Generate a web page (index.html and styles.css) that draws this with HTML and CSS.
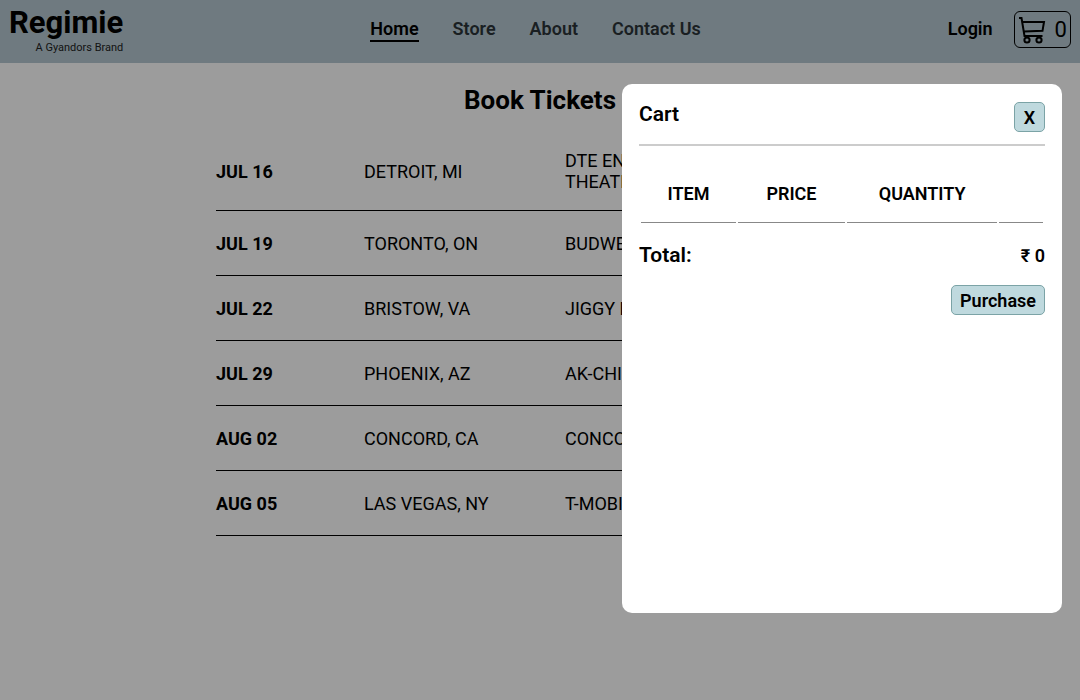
FILE: index.html
```html
<!DOCTYPE html>
<html lang="en">
<head>
<meta charset="utf-8">
<meta name="viewport" content="width=device-width, initial-scale=1">
<title>Regimie</title>
<link rel="stylesheet" href="styles.css">
</head>
<body>
<header class="site-header">
  <div class="brand">
    <span class="brand-name">Regimie</span>
    <span class="brand-tag">A Gyandors Brand</span>
  </div>
  <nav class="nav">
    <a class="nav-link active" href="#">Home</a>
    <a class="nav-link" href="#">Store</a>
    <a class="nav-link" href="#">About</a>
    <a class="nav-link" href="#">Contact Us</a>
  </nav>
  <div class="account">
    <a class="login" href="#">Login</a>
    <button class="cart-button" type="button" aria-label="Open cart">
      <svg class="cart-icon" viewBox="0 0 28 30" aria-hidden="true">
        <path d="M0 3H2.500L5.500 21H23.500M3 7H25L23.500 15.800L5 16.500"/>
        <circle cx="8" cy="25" r="2.600"/>
        <circle cx="20" cy="25" r="2.600"/>
      </svg>
      <span class="cart-count">0</span>
    </button>
  </div>
</header>

<main class="tickets">
  <h1 class="tickets-title">Book Tickets</h1>
  <ul class="tour-list">
    <li class="tour"><strong>JUL 16</strong><span>DETROIT, MI</span><span>DTE ENERGY MUSIC THEATRE</span></li>
    <li class="tour"><strong>JUL 19</strong><span>TORONTO, ON</span><span>BUDWEISER STAGE</span></li>
    <li class="tour"><strong>JUL 22</strong><span>BRISTOW, VA</span><span>JIGGY LUBE LIVE</span></li>
    <li class="tour"><strong>JUL 29</strong><span>PHOENIX, AZ</span><span>AK-CHIN PAVILION</span></li>
    <li class="tour"><strong>AUG 02</strong><span>CONCORD, CA</span><span>CONCORD PAVILION</span></li>
    <li class="tour"><strong>AUG 05</strong><span>LAS VEGAS, NY</span><span>T-MOBILE ARENA</span></li>
  </ul>
</main>

<div class="backdrop"></div>
<section class="cart" role="dialog" aria-labelledby="cart-title">
  <div class="cart-head">
    <h2 class="cart-title" id="cart-title">Cart</h2>
    <button class="button" type="button" aria-label="Close cart">X</button>
  </div>
  <table class="cart-table">
    <thead>
      <tr><th class="col-item">ITEM</th><th class="col-price">PRICE</th><th class="col-quantity">QUANTITY</th><th></th></tr>
    </thead>
  </table>
  <div class="cart-total">
    <span class="total-label">Total:</span>
    <span class="total-value">₹ 0</span>
  </div>
  <div class="cart-actions">
    <button class="button" type="button">Purchase</button>
  </div>
</section>
</body>
</html>
```
FILE: styles.css
```css
* {
  box-sizing: border-box;
}

body {
  margin: 0;
  min-height: 100vh;
  background: #fff;
  color: #000;
  font-family: Roboto, "Liberation Sans", sans-serif;
  font-size: 18px;
  line-height: 21px;
}

.site-header {
  display: flex;
  justify-content: space-between;
  height: 63px;
  padding: 0 9px;
  background: #b5c8d1;
}

.brand {
  display: flex;
  flex-direction: column;
  align-items: flex-end;
  padding-top: 5px;
}

.brand-name {
  font-size: 31px;
  font-weight: 700;
  line-height: 36px;
}

.brand-tag {
  color: #222;
  font-size: 11px;
  line-height: 14px;
}

.nav {
  display: flex;
  align-items: flex-start;
  gap: 34px;
  padding-top: 18px;
}

.nav-link {
  padding-bottom: 1px;
  border-bottom: 2px solid transparent;
  color: #2c3438;
  font-weight: 600;
  text-decoration: none;
}

.nav-link.active {
  border-color: #000;
  color: #000;
}

.account {
  display: flex;
  align-items: flex-start;
  gap: 21px;
  padding-top: 11px;
}

.login {
  padding-top: 7px;
  color: #000;
  font-weight: 600;
  text-decoration: none;
}

.cart-button {
  display: flex;
  align-items: center;
  gap: 8px;
  height: 37px;
  padding: 0 3px 0 4px;
  border: 1px solid #000;
  border-radius: 6px;
  background: transparent;
  color: #000;
  font: 22px/26px Roboto, sans-serif;
}

.cart-icon {
  width: 28px;
  height: 30px;
  fill: none;
  stroke: #000;
  stroke-width: 2;
}

.tickets {
  width: 60%;
  margin: 0 auto;
  padding-top: 21px;
}

.tickets-title {
  margin: 0;
  font-size: 26px;
  font-weight: 700;
  line-height: 32px;
  text-align: center;
}

.tour-list {
  margin: 16px 0 0;
  padding: 0;
  list-style: none;
}

.tour {
  display: grid;
  grid-template-columns: 148fr 201fr 200fr 99fr;
  align-items: center;
  min-height: 65px;
  padding: 18px 0;
  border-bottom: 1px solid #000;
}

.tour strong {
  font-weight: 700;
}

.backdrop {
  position: fixed;
  inset: 0;
  background: rgba(0, 0, 0, 0.39);
}

.cart {
  position: fixed;
  top: 84px;
  right: 18px;
  width: 440px;
  max-width: calc(100% - 36px);
  min-height: 529px;
  padding: 18px 17px;
  border-radius: 10px;
  background: #fff;
}

.cart-head {
  display: flex;
  align-items: flex-start;
  justify-content: space-between;
  padding-bottom: 12px;
  border-bottom: 2px solid #ccc;
}

.cart-title {
  margin: 0;
  font-size: 21px;
  font-weight: 600;
  line-height: 24px;
}

.button {
  min-width: 31px;
  height: 30px;
  padding: 0 8px;
  border: 1px solid #7ba3a6;
  border-radius: 5px;
  background: #bfd9de;
  color: #000;
  font: 600 18px/21px Roboto, sans-serif;
}

.cart-table {
  width: 100%;
  margin-top: 15px;
  border-spacing: 2px;
}

.cart-table th {
  padding: 20px 0 18px;
  border-bottom: 1px solid #888;
  font-weight: 600;
}

.col-item {
  width: 24%;
}

.col-price {
  width: 27%;
}

.col-quantity {
  width: 38%;
}

.cart-total {
  display: flex;
  align-items: center;
  justify-content: space-between;
  margin-top: 18px;
}

.total-label {
  font-size: 21px;
  font-weight: 600;
  line-height: 24px;
}

.total-value {
  font-weight: 600;
}

.cart-actions {
  display: flex;
  justify-content: flex-end;
  margin-top: 18px;
}
```
